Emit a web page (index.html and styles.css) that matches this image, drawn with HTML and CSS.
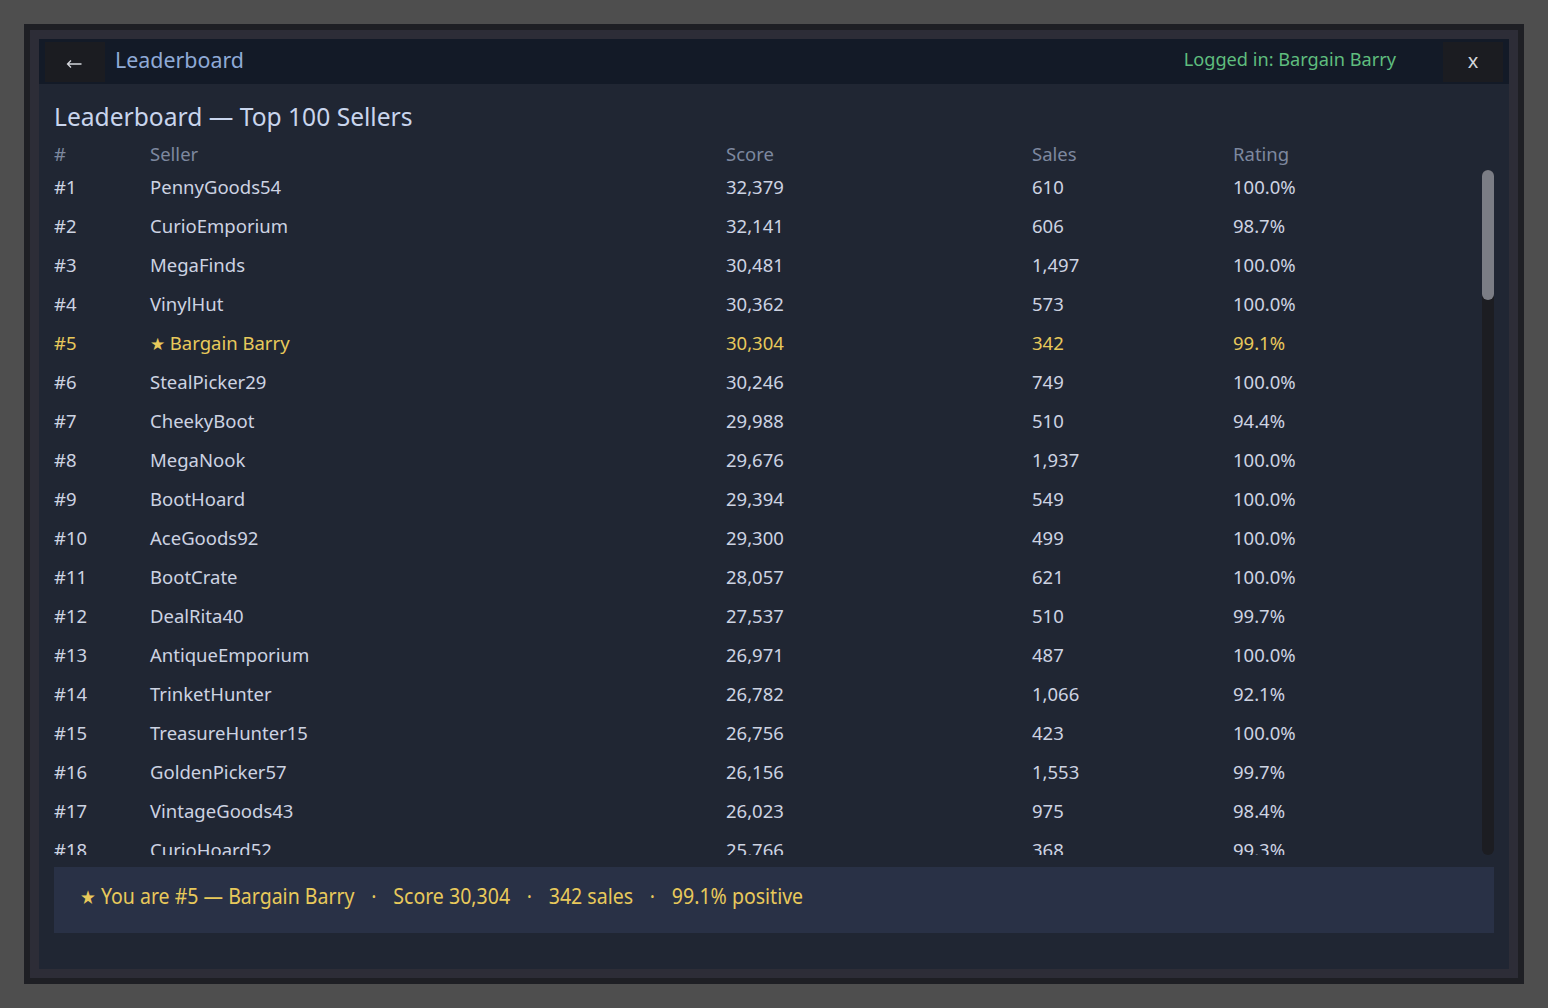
FILE: index.html
```html
<!DOCTYPE html>
<html>
<head>
<meta charset="utf-8">
<title>Leaderboard</title>
<link rel="stylesheet" href="styles.css">
</head>
<body>
<div class="frame">
  <div class="panel">
    <div class="topbar">
      <div class="btn back">
        <svg width="16" height="10" viewBox="0 0 16 10"><path d="M15.5 5H1.5M5 1.5L1.5 5L5 8.5" fill="none" stroke="#d4d6dc" stroke-width="1.3"/></svg>
      </div>
      <div class="bartitle">Leaderboard</div>
      <div class="logged">Logged in: Bargain Barry</div>
      <div class="btn close">x</div>
    </div>

    <div class="content">
      <div class="heading">Leaderboard &mdash; Top 100 Sellers</div>

      <div class="row head">
        <div>#</div><div>Seller</div><div>Score</div><div>Sales</div><div>Rating</div>
      </div>

      <div class="listwrap">
        <div class="list">
          <div class="row"><div>#1</div><div>PennyGoods54</div><div>32,379</div><div>610</div><div>100.0%</div></div>
          <div class="row"><div>#2</div><div>CurioEmporium</div><div>32,141</div><div>606</div><div>98.7%</div></div>
          <div class="row"><div>#3</div><div>MegaFinds</div><div>30,481</div><div>1,497</div><div>100.0%</div></div>
          <div class="row"><div>#4</div><div>VinylHut</div><div>30,362</div><div>573</div><div>100.0%</div></div>
          <div class="row me"><div>#5</div><div><span class="star">&#9733;</span> Bargain Barry</div><div>30,304</div><div>342</div><div>99.1%</div></div>
          <div class="row"><div>#6</div><div>StealPicker29</div><div>30,246</div><div>749</div><div>100.0%</div></div>
          <div class="row"><div>#7</div><div>CheekyBoot</div><div>29,988</div><div>510</div><div>94.4%</div></div>
          <div class="row"><div>#8</div><div>MegaNook</div><div>29,676</div><div>1,937</div><div>100.0%</div></div>
          <div class="row"><div>#9</div><div>BootHoard</div><div>29,394</div><div>549</div><div>100.0%</div></div>
          <div class="row"><div>#10</div><div>AceGoods92</div><div>29,300</div><div>499</div><div>100.0%</div></div>
          <div class="row"><div>#11</div><div>BootCrate</div><div>28,057</div><div>621</div><div>100.0%</div></div>
          <div class="row"><div>#12</div><div>DealRita40</div><div>27,537</div><div>510</div><div>99.7%</div></div>
          <div class="row"><div>#13</div><div>AntiqueEmporium</div><div>26,971</div><div>487</div><div>100.0%</div></div>
          <div class="row"><div>#14</div><div>TrinketHunter</div><div>26,782</div><div>1,066</div><div>92.1%</div></div>
          <div class="row"><div>#15</div><div>TreasureHunter15</div><div>26,756</div><div>423</div><div>100.0%</div></div>
          <div class="row"><div>#16</div><div>GoldenPicker57</div><div>26,156</div><div>1,553</div><div>99.7%</div></div>
          <div class="row"><div>#17</div><div>VintageGoods43</div><div>26,023</div><div>975</div><div>98.4%</div></div>
          <div class="row"><div>#18</div><div>CurioHoard52</div><div>25,766</div><div>368</div><div>99.3%</div></div>
          <div class="row"><div>#19</div><div>BargainBin7</div><div>25,512</div><div>402</div><div>100.0%</div></div>
        </div>
        <div class="scrollbar"><div class="thumb"></div></div>
      </div>

      <div class="summary">
        <span class="sumtext"><span class="star">&#9733;</span> You are #5 &mdash; Bargain Barry<span class="dot">&middot;</span>Score 30,304<span class="dot">&middot;</span>342 sales<span class="dot">&middot;</span>99.1% positive</span>
      </div>
    </div>
  </div>
</div>
</body>
</html>
```

FILE: styles.css
```css
body
{
  margin:0;
  padding:24px;
  background-color:#4e4e4e;
  font-family:"Noto Sans", "Open Sans", sans-serif;
}

.frame
{
  width:1500px;
  height:960px;
  box-sizing:border-box;
  border:6px solid #1e1f24;
  background-color:#2d2d37;
  padding:9px;
}

.panel
{
  height:100%;
  background-color:#202633;
  display:flex;
  flex-direction:column;
}

.topbar
{
  height:45px;
  background-color:#131a27;
  display:flex;
  align-items:center;
  padding:0 6px;
}

.btn
{
  width:60px;
  height:40px;
  margin-top:1px;
  background-color:#1b1c21;
  color:#d4d6dc;
  display:flex;
  align-items:center;
  justify-content:center;
  box-sizing:border-box;
}

.back
{
  padding-top:4px;
  padding-right:3px;
}

.back svg
{
  display:block;
}

.close
{
  font-size:20px;
  padding-bottom:4px;
}

.bartitle
{
  margin-left:10px;
  font-size:21.4px;
  color:#8faad6;
  flex:1;
  padding-bottom:5px;
}

.logged
{
  font-size:18.2px;
  color:#5fbd7e;
  margin-right:47px;
  padding-bottom:6px;
}

.content
{
  flex:1;
  display:flex;
  flex-direction:column;
  padding:0 15px;
  min-height:0;
}

.heading
{
  margin-top:17px;
  height:32px;
  line-height:32px;
  font-size:24.6px;
  color:#c9d5ed;
}

.row
{
  display:grid;
  grid-template-columns:96px 576px 306px 201px 1fr;
  height:39px;
  line-height:39px;
  font-size:18.5px;
  color:#cdd3e2;
  white-space:nowrap;
}

.row.head
{
  margin-top:7px;
  height:27px;
  line-height:27px;
  color:#7d889f;
}

.row.me
{
  color:#e8c95b;
}

.star
{
  font-size:17px;
}

.listwrap
{
  height:688px;
  display:flex;
}

.list
{
  flex:1;
  overflow:hidden;
}

.scrollbar
{
  width:12px;
  margin-top:3px;
  background-color:#1c1d22;
  border-radius:6px;
}

.thumb
{
  height:130px;
  background-color:#7b7d85;
  border-radius:6px;
}

.summary
{
  margin-top:12px;
  height:66px;
  background-color:#293146;
  display:flex;
  align-items:center;
  padding-left:26px;
}

.sumtext
{
  font-size:21px;
  line-height:28px;
  color:#e8c95b;
  display:inline-block;
  transform-origin:left center;
  transform:scaleX(0.93);
  white-space:nowrap;
  margin-top:-7px;
}

.sumtext .star
{
  font-size:19px;
}

.dot
{
  margin:0 18px;
}
```
